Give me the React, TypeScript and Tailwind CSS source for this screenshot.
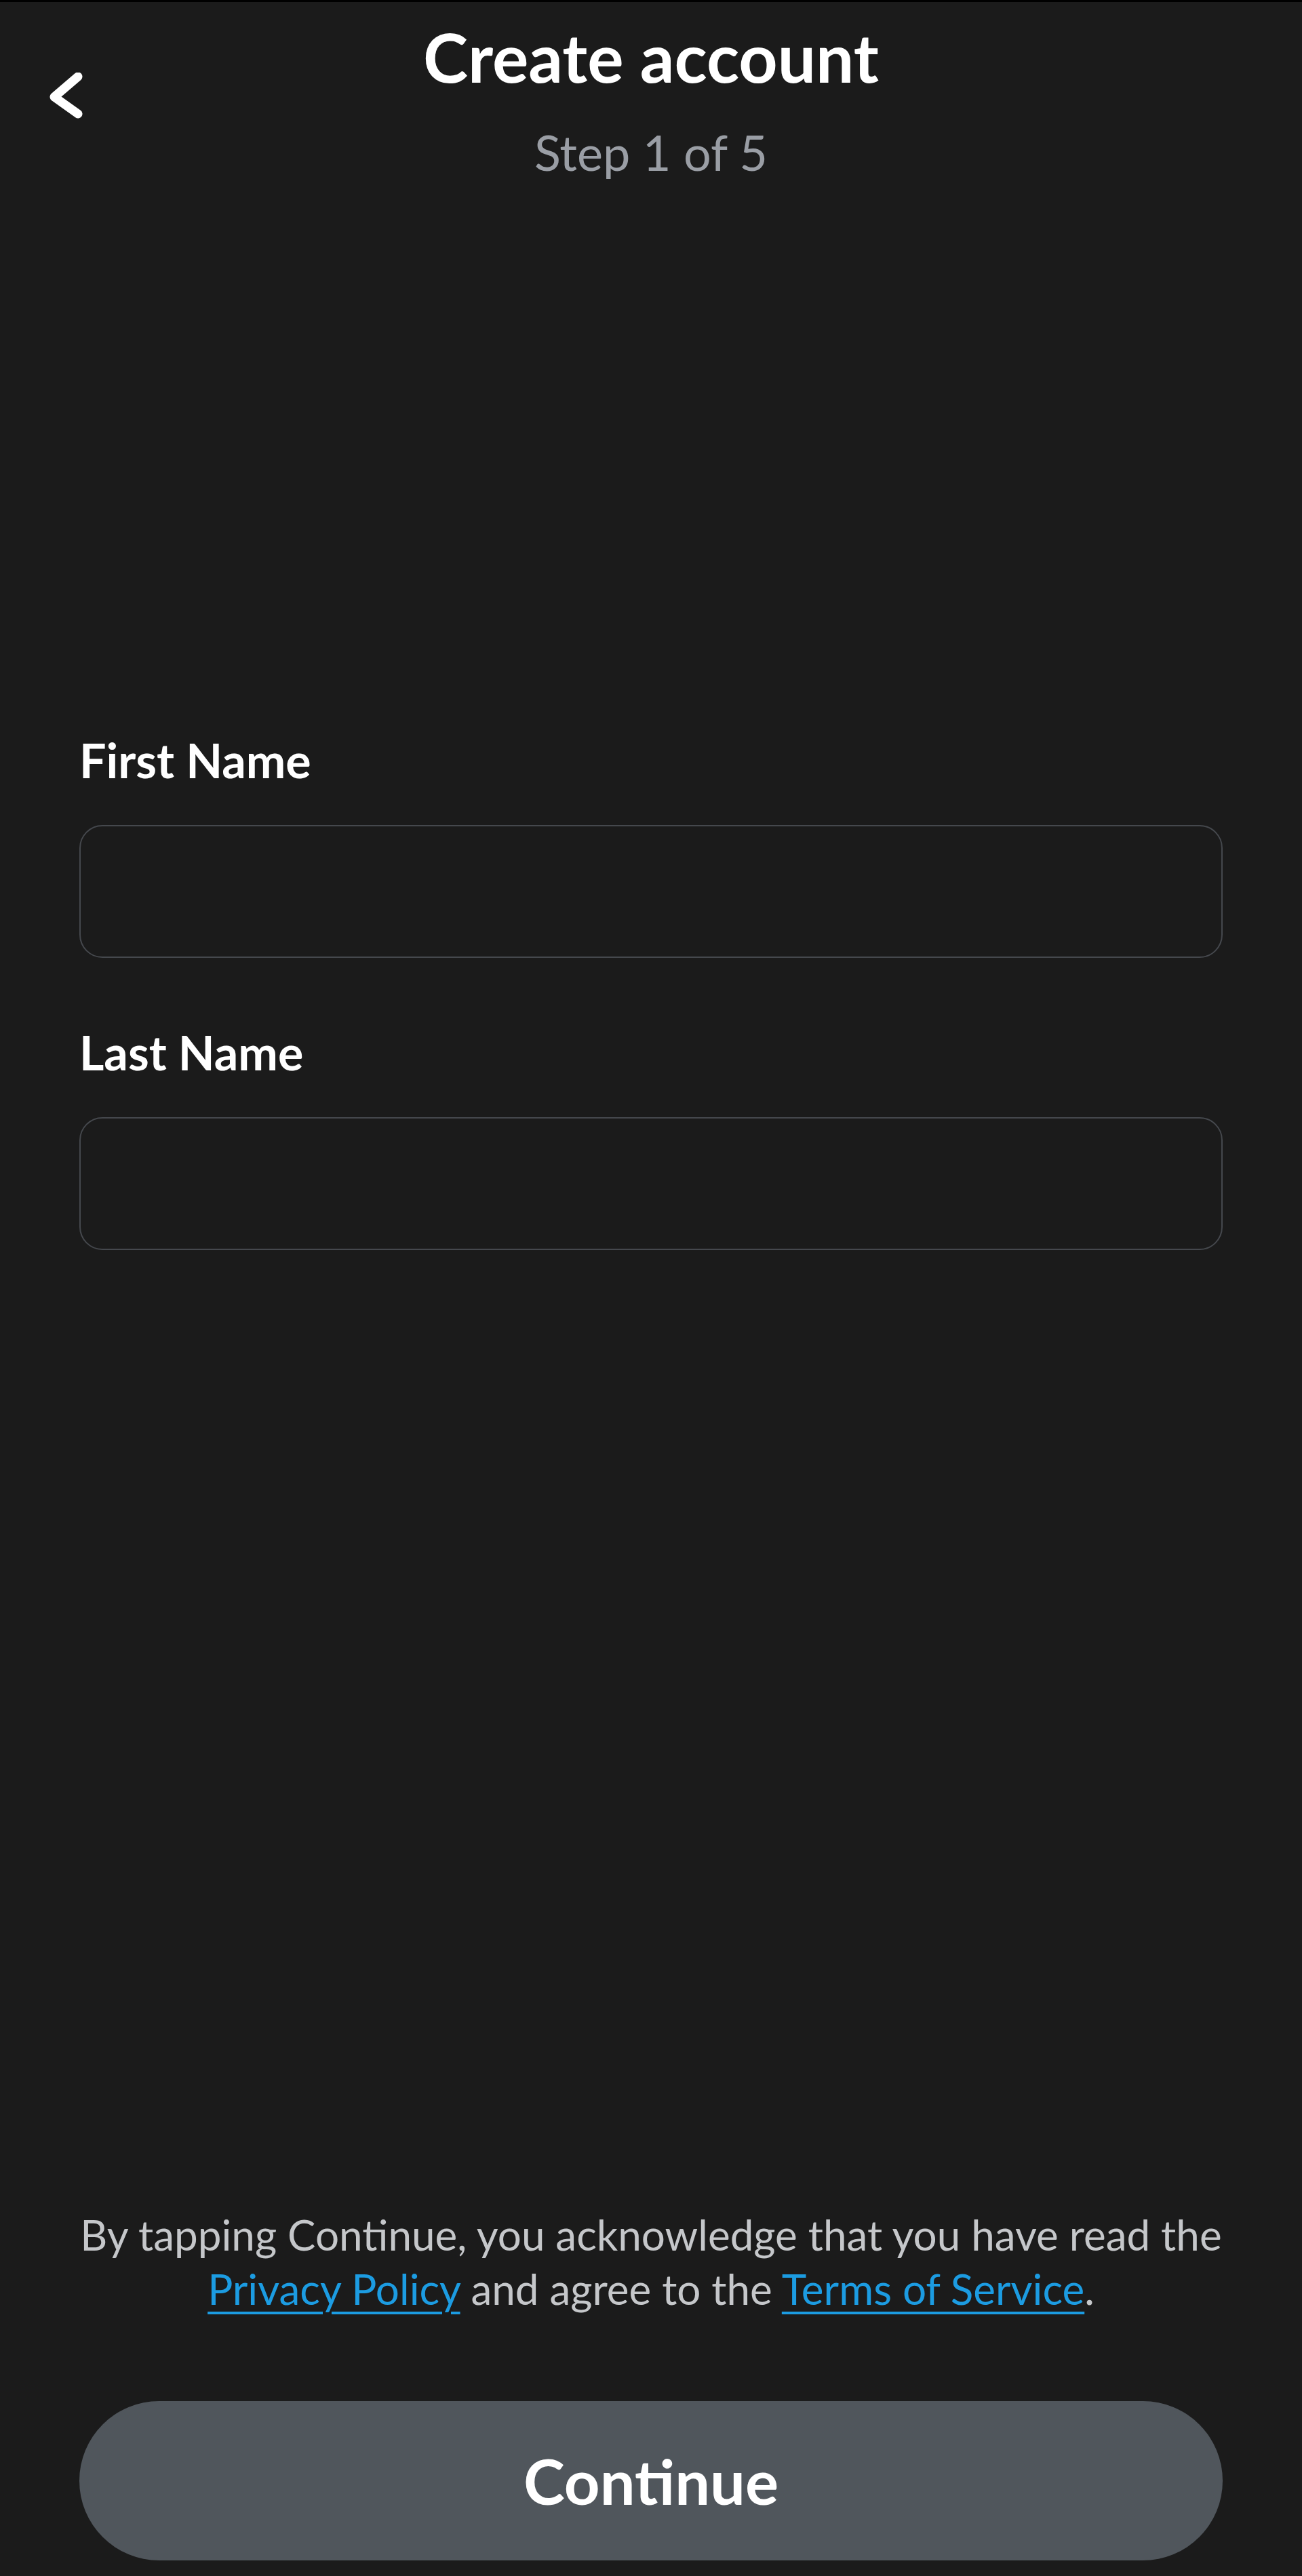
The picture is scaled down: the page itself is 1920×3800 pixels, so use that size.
import type { ReactNode } from "react";

const font = { fontFamily: "Lato, 'Noto Sans', sans-serif" };

function BackChevron() {
  return (
    <svg width="70" height="80" viewBox="0 0 70 80" fill="none" aria-hidden="true">
      <path d="M51 6 L16 36 L51 61" stroke="white" strokeWidth="13" strokeLinecap="round" strokeLinejoin="round" />
    </svg>
  );
}

function Field({ label, first }: { label: string; first?: boolean }) {
  return (
    <div className={first ? "" : "mt-[98px]"}>
      <label className="block text-[70px] font-bold leading-[82px] text-white">{label}</label>
      <input
        type="text"
        className="mt-[55px] block h-[196px] w-full rounded-[34px] border-2 border-[#45484d] bg-[#1b1b1b] px-[40px] text-[64px] text-white outline-none"
      />
    </div>
  );
}

function TextLink({ children }: { children: ReactNode }) {
  return (
    <a href="#" className="text-[#1c9ce2] underline decoration-[4px] underline-offset-[10px]">
      {children}
    </a>
  );
}

export default function App() {
  return (
    <div className="flex h-[3800px] w-full flex-col border-t-[3px] border-black bg-[#1b1b1b]" style={font}>
      <header className="grid grid-cols-[1fr_auto_1fr] pt-[20px] pl-[64px]">
        <button type="button" className="mt-[84px] self-start justify-self-start">
          <BackChevron />
        </button>
        <div className="flex flex-col items-center pr-[64px]">
          <h1 className="text-[100px] font-bold leading-[120px] text-white">Create account</h1>
          <p className="mt-[38px] text-[72px] leading-[86px] text-[#9a9ea5]">Step 1 of 5</p>
        </div>
        <div />
      </header>

      <form className="mt-[813px] px-[117px]">
        <Field label="First Name" first />
        <Field label="Last Name" />
      </form>

      <div className="flex-1" />

      <footer className="pb-[23px]">
        <p className="px-[100px] text-center text-[62px] leading-[80px] text-[#c5c7ca]">
          By tapping Continue, you acknowledge that you have read the <TextLink>Privacy Policy</TextLink> and agree to the{" "}
          <TextLink>Terms of Service</TextLink>.
        </p>
        <div className="px-[117px]">
          <button
            type="button"
            className="mt-[126px] flex h-[235px] w-full items-center justify-center rounded-full bg-[#50565c] text-[92px] font-bold text-white"
          >
            Continue
          </button>
        </div>
      </footer>
    </div>
  );
}
